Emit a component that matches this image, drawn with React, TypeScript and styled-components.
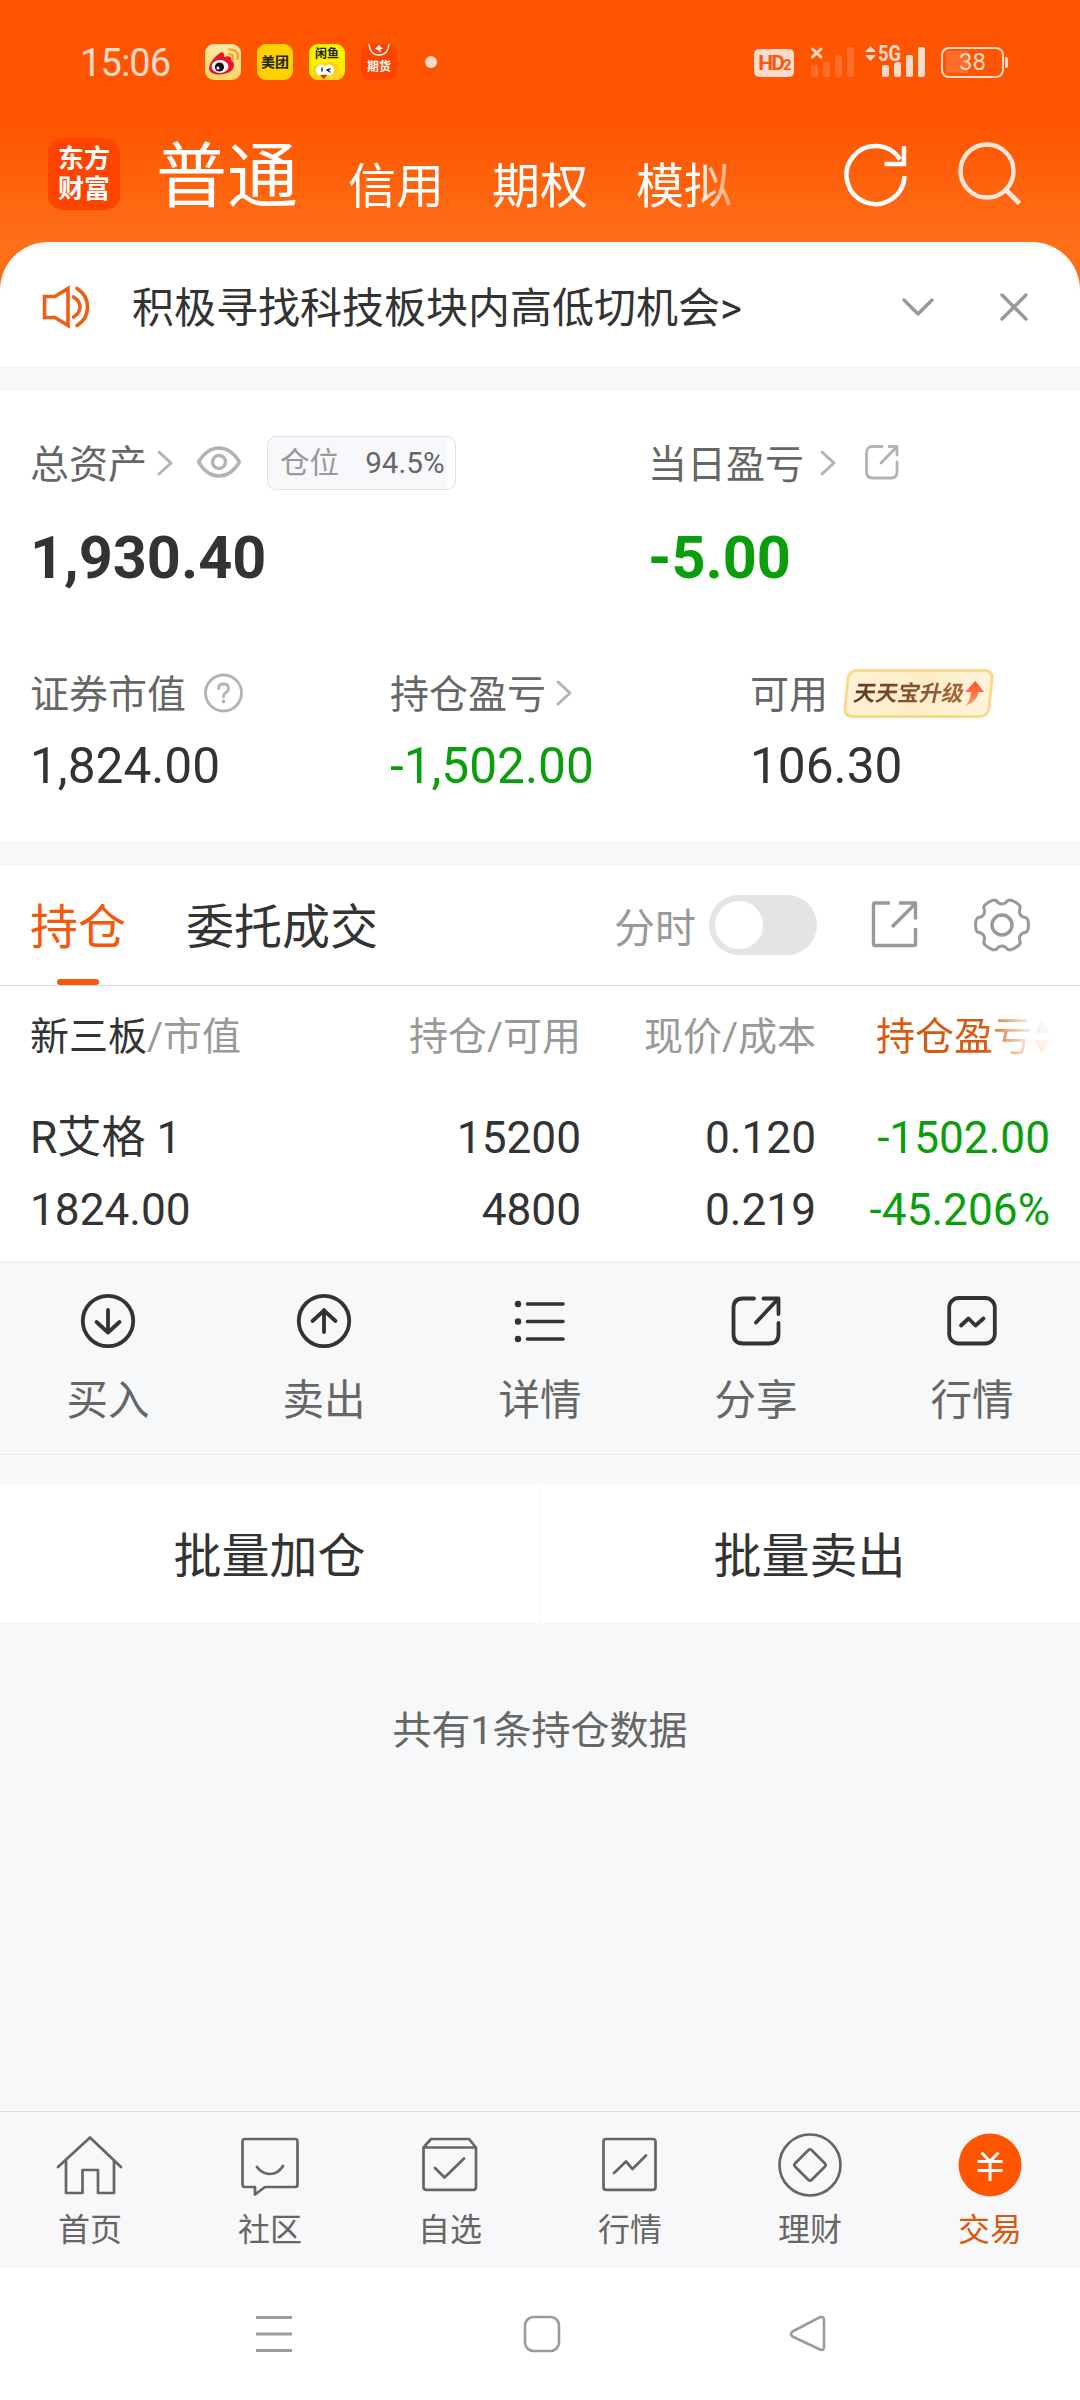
import React from "react";
import styled, { createGlobalStyle } from "styled-components";

const GlobalStyle = createGlobalStyle`
  * { box-sizing: border-box; }
  body {
    margin: 0;
    background: #fff;
    font-family: Roboto, "Noto Sans CJK SC", sans-serif;
    color: #333;
  }
  svg { display: block; flex: none; overflow: visible; }
`;

const INK = "#333";
const SUB = "#666";
const MUTED = "#999";
const LIGHT = "#b3b3b3";
const ACCENT = "#f4590a";
const GREEN = "#0a9e0c";
const STATUS = "#ffd9c9";

const Screen = styled.div`
  width: 1080px;
  height: 2400px;
  display: flex;
  flex-direction: column;
  overflow: hidden;
  white-space: nowrap;
  background: linear-gradient(#ff5500 0, #ff5500 122px, #ff7019 246px, #ff6a14 300px, #f7f8fa 300px);
`;

/* ---------- status bar ---------- */

const StatusBar = styled.div`
  height: 124px;
  flex: none;
  display: flex;
  align-items: center;
  padding: 0 72px 0 80px;
  color: ${STATUS};
`;

const Clock = styled.div`
  width: 125px;
  padding-top: 2px;
  font-size: 38px;
  line-height: 40px;
  letter-spacing: -0.9px;
`;

const AppIcons = styled.div`
  display: flex;
  align-items: center;
  gap: 16px;
  height: 36px;
`;

const AppIcon = styled.div<{ $bg: string; $color?: string; $size?: number; $pad?: number }>`
  width: 36px;
  height: 36px;
  border-radius: 9px;
  overflow: hidden;
  background: ${(p) => p.$bg};
  color: ${(p) => p.$color ?? "#222"};
  font-size: ${(p) => p.$size ?? 14}px;
  line-height: 16px;
  font-weight: 700;
  text-align: center;
  padding-top: ${(p) => p.$pad ?? 0}px;
`;

const Dot = styled.div`
  width: 12px;
  height: 12px;
  margin-left: 12px;
  border-radius: 50%;
  background: ${STATUS};
`;

const StatusRight = styled.div`
  margin-left: auto;
  display: flex;
  align-items: center;
`;

const HdBadge = styled.div`
  width: 40px;
  height: 28px;
  margin: 1px 17px 0 0;
  border-radius: 5px;
  background: ${STATUS};
  color: #f0590f;
  display: flex;
  justify-content: center;
  align-items: baseline;
  font: 700 21px/28px "Roboto", sans-serif;
  letter-spacing: -1.8px;
  small { font-size: 15px; }
`;

const Battery = styled.div`
  width: 63px;
  height: 31px;
  margin-left: 16px;
  border: 2.5px solid ${STATUS};
  border-radius: 8px;
  padding: 2px;
  background: linear-gradient(90deg, #ff6d2b 22px, transparent 22px) 3px 2px / 52px 22px no-repeat;
  text-align: center;
  font-size: 24px;
  line-height: 23px;
`;

const BatteryTip = styled.div`
  width: 3px;
  height: 11px;
  margin-left: 1px;
  background: ${STATUS};
  border-radius: 0 2px 2px 0;
`;

/* ---------- title bar ---------- */

const TitleBar = styled.div`
  height: 118px;
  flex: none;
  display: flex;
  align-items: flex-start;
  padding: 14px 59px 0 48px;
  color: #fff;
`;

const Logo = styled.div`
  width: 72px;
  height: 72px;
  border-radius: 15px;
  background: #ff4400;
  padding-top: 6px;
  text-align: center;
  font-weight: 700;
  font-size: 26px;
  line-height: 30px;
`;

const AccountTabs = styled.div`
  display: flex;
  gap: 48px;
  width: 590px;
  margin-left: 36px;
  height: 84px;
  mask-image: linear-gradient(90deg, #000 540px, transparent 600px);
`;

const AccountTab = styled.div<{ $active?: boolean }>`
  width: ${(p) => (p.$active ? 144 : 96)}px;
  font-size: ${(p) => (p.$active ? 71 : 48)}px;
  line-height: ${(p) => (p.$active ? 77 : 98)}px;
`;

const TitleActions = styled.div`
  margin: 4px 0 0 auto;
  display: flex;
  gap: 49px;
`;

/* ---------- notice ---------- */

const Notice = styled.div`
  height: 125px;
  flex: none;
  display: flex;
  align-items: center;
  padding: 5px 52px 0 42px;
  border-radius: 48px 48px 0 0;
  background: linear-gradient(#f7f8fa 5px, #fff 5px);
`;

const NoticeText = styled.div`
  margin-left: 42px;
  flex: 1;
  padding-top: 4px;
  font-size: 42px;
  line-height: 60px;
`;

const Gap = styled.div<{ $h: number }>`
  height: ${(p) => p.$h}px;
  flex: none;
  background: #f7f8fa;
`;

/* ---------- assets ---------- */

const Assets = styled.div`
  height: 450px;
  flex: none;
  background: #fff;
  padding: 44px 0 0 30px;
`;

const AssetRow = styled.div<{ $cols: string; $top?: number }>`
  display: grid;
  grid-template-columns: ${(p) => p.$cols};
  margin-top: ${(p) => p.$top ?? 0}px;
`;

const Label = styled.div`
  display: flex;
  align-items: center;
  height: 56px;
  color: ${SUB};
  font-size: 39px;
  line-height: 56px;
`;

const LabelText = styled.span`
  padding-top: 3px;
`;

const Space = styled.span<{ $w: number }>`
  width: ${(p) => p.$w}px;
  flex: none;
`;

const Total = styled.div<{ $green?: boolean }>`
  margin-top: 31px;
  height: 72px;
  font-size: 59.4px;
  line-height: 72px;
  font-weight: 700;
  color: ${(p) => (p.$green ? GREEN : INK)};
`;

const Amount = styled.div<{ $green?: boolean }>`
  margin-top: 15px;
  font-size: 49.6px;
  line-height: 60px;
  color: ${(p) => (p.$green ? GREEN : INK)};
`;

const PositionBadge = styled.div`
  width: 189px;
  height: 54px;
  border: 1px solid #e0e0e2;
  border-radius: 9px;
  background: linear-gradient(90deg, #f7f8fb 179px, #fff 179px);
  display: flex;
  align-items: center;
  padding-left: 12px;
  font-size: 29.6px;
  line-height: 50px;
  color: ${MUTED};
  b { font-weight: 400; color: ${SUB}; margin-left: 26px; }
`;

const Promo = styled.div`
  width: 147px;
  height: 49px;
  margin-left: 17px;
  border: 3px solid #f8d98b;
  border-radius: 9px;
  background: linear-gradient(100deg, #fff1d6, #fdedc8 50%, #fff3da);
  transform: skewX(-6deg);
  display: flex;
  align-items: center;
  padding-left: 6px;
`;

const PromoText = styled.span`
  font-size: 22px;
  line-height: 40px;
  font-weight: 700;
  transform: skewX(-6deg);
  background: linear-gradient(90deg, #5e3a20, #a8683a);
  background-clip: text;
  color: transparent;
`;

/* ---------- holdings ---------- */

const HoldingTabs = styled.div`
  height: 121px;
  flex: none;
  display: flex;
  background: #fff;
  border-bottom: 1px solid #dcdcde;
  padding: 0 51px 0 30px;
`;

const HoldingTab = styled.div<{ $active?: boolean }>`
  display: flex;
  flex-direction: column;
  align-items: center;
  margin-right: 60px;
  padding-top: 33px;
  font-size: 48px;
  line-height: 60px;
  color: ${(p) => (p.$active ? ACCENT : INK)};
  &::after {
    content: "";
    width: 42px;
    height: 6px;
    margin-top: 21px;
    border-radius: 3px;
    background: ${(p) => (p.$active ? ACCENT : "transparent")};
  }
`;

const TabTools = styled.div`
  margin-left: auto;
  display: flex;
  align-items: center;
  color: ${MUTED};
  font-size: 41px;
`;

const Toggle = styled.div`
  width: 108px;
  height: 60px;
  margin: 0 54px 0 13px;
  padding: 6px;
  border-radius: 30px;
  background: #e4e4e7;
  &::after {
    content: "";
    display: block;
    width: 48px;
    height: 48px;
    border-radius: 50%;
    background: #fff;
  }
`;

const Table = styled.div`
  height: 276px;
  flex: none;
  background: #fff;
  padding: 1px 30px 0;
`;

const Row = styled.div<{ $head?: boolean; $top: number }>`
  display: grid;
  grid-template-columns: 330px 221px 235px 234px;
  margin-top: ${(p) => p.$top}px;
  font-size: ${(p) => (p.$head ? 39 : 44.2)}px;
  line-height: 60px;
  color: ${(p) => (p.$head ? MUTED : INK)};
`;

const Cell = styled.div<{ $green?: boolean }>`
  color: ${(p) => (p.$green ? GREEN : "inherit")};
  &:not(:first-child) { text-align: right; }
  b { font-weight: 400; color: ${INK}; }
`;

const SortCell = styled.div`
  display: flex;
  align-items: center;
  justify-content: flex-end;
  gap: 2px;
  color: #d9590f;
  mask-image: linear-gradient(90deg, #000 168px, rgba(0, 0, 0, 0.25) 206px, rgba(0, 0, 0, 0.12) 216px, rgba(0, 0, 0, 0.06) 234px);
`;

/* ---------- row actions ---------- */

const Actions = styled.div`
  height: 193px;
  flex: none;
  display: grid;
  grid-template-columns: repeat(5, 1fr);
  border-top: 1px solid #e8e9eb;
  border-bottom: 1px solid #ebecee;
  background: #f7f8fa;
`;

const Action = styled.div`
  display: flex;
  flex-direction: column;
  align-items: center;
  padding-top: 30px;
  gap: 22px;
  font-size: 41.5px;
  line-height: 60px;
  color: ${SUB};
`;

const Batch = styled.div`
  height: 138px;
  flex: none;
  display: grid;
  grid-template-columns: 1fr 1fr;
  background: #fff;
`;

const BatchButton = styled.div`
  padding-right: 1px;
  font-size: 48px;
  line-height: 143px;
  height: 138px;
  text-align: center;
  & + & { box-shadow: -1px 0 #f4f5f6; }
`;

const Summary = styled.div`
  flex: 1;
  padding-top: 78px;
  background: #f7f8fa;
  text-align: center;
  color: ${SUB};
  font-size: 39px;
  line-height: 60px;
`;

/* ---------- bottom bars ---------- */

const NavBar = styled.div`
  height: 157px;
  flex: none;
  display: grid;
  grid-template-columns: repeat(6, 1fr);
  border-top: 1px solid #dfe0e2;
  background: #f8f8fa;
`;

const NavItem = styled.div<{ $active?: boolean }>`
  display: flex;
  flex-direction: column;
  align-items: center;
  padding-top: 21px;
  font-size: 32px;
  line-height: 40px;
  gap: 13px;
  color: ${(p) => (p.$active ? "#d9590f" : SUB)};
`;

const SystemBar = styled.div`
  height: 132px;
  flex: none;
  display: flex;
  justify-content: space-between;
  padding: 47px 254px 0 255px;
  background: #fff;
`;

/* ---------- icons ---------- */

const Chevron = () => (
  <svg width="16" height="26" fill="none" stroke={LIGHT} strokeWidth="3" strokeLinecap="round" strokeLinejoin="round">
    <path d="M2 2 L14 13 L2 24" />
  </svg>
);

const Bars = ({ color }: { color: string }) => (
  <g fill={color}>
    <rect x="0" y="18" width="7" height="12" rx="2" />
    <rect x="12" y="15" width="7" height="15" rx="2" />
    <rect x="24" y="8" width="7" height="22" rx="2" />
    <rect x="36" y="0" width="7" height="30" rx="2" />
  </g>
);

const gearPath = (() => {
  const pt = (x: number, y: number, a: number) => {
    const c = Math.cos(a), s = Math.sin(a);
    return `${(x * c - y * s).toFixed(2)} ${(x * s + y * c).toFixed(2)}`;
  };
  let d = "";
  for (let i = 0; i < 6; i++) {
    const a = (i * Math.PI) / 3;
    d += `${i ? "L" : "M"}${pt(26, -4.6, a)} Q${pt(26.8, 0, a)} ${pt(26, 4.6, a)} L${pt(24.6, 7, a)} Q${pt(14.9, 8.6, a)} ${pt(18.4, 17.8, a)} `;
  }
  return d + "Z";
})();

const stroke = (color: string, w: number) => ({
  fill: "none",
  stroke: color,
  strokeWidth: w,
  strokeLinecap: "round" as const,
  strokeLinejoin: "round" as const,
});

const actions = [
  {
    label: "买入",
    icon: (<><circle r="25.2" /><path d="M0 -11 V11 M-11.5 1 L0 11.5 L11.5 1" /></>),
  },
  {
    label: "卖出",
    icon: (<><circle r="25.2" /><path d="M0 11 V-11 M-11.5 0 L0 -10.5 L11.5 0" /></>),
  },
  {
    label: "详情",
    icon: (
      <>
        <path d="M-12.5 -17 H23 M-12.5 .5 H23 M-12.5 18 H23" strokeWidth="3.6" />
        <path d="M-22 -17 h.01 M-22 .5 h.01 M-22 18 h.01" strokeWidth="6.4" />
      </>
    ),
  },
  {
    label: "分享",
    icon: (<path d="M-2 -22.5 H-13 Q-22.5 -22.5 -22.5 -13 V13 Q-22.5 22.5 -13 22.5 H13 Q22.5 22.5 22.5 13 V2 M7.5 -22.5 H22.5 V-7 M22 -22 L0 1.5" />),
  },
  {
    label: "行情",
    icon: (<><rect x="-22.8" y="-23" width="45.6" height="45.5" rx="9.5" /><path d="M-11 4.5 L-3.5 -2.5 L3.5 4.5 L11.5 -2.5" /></>),
  },
];

const navItems = [
  { label: "首页", icon: <path d="M-32 2 L0 -27.5 L31 2 M-24 -5 V28 H-7.5 V5 H8 V28 H24 V-5" /> },
  {
    label: "社区",
    icon: <path d="M-25 -26 H25 Q27.5 -26 27.5 -23.5 V19.5 Q27.5 22 25 22 H-5 L-15 29.5 V22 H-25 Q-27.5 22 -27.5 19.5 V-23.5 Q-27.5 -26 -25 -26 Z M-13 2 Q-8 9 0 9 T13 1" />,
  },
  {
    label: "自选",
    icon: <path d="M-26.5 -17.5 V22 Q-26.5 24.8 -24 24.8 H23.5 Q26 24.8 26 22 V-17.5 Z L-19 -26 H19 L26 -17.5 M-15 3 L-5.5 12.5 L14 -6.5" />,
  },
  {
    label: "行情",
    icon: (<><rect x="-26.5" y="-26" width="52" height="50.8" rx="2.5" /><path d="M-16 8 L-4 -3.5 L2.5 4 L16 -9.5" /></>),
  },
  {
    label: "理财",
    icon: (<><circle r="30.5" /><path d="M-1.5 -15 Q0 -16.5 1.5 -15 L15 -1.5 Q16.5 0 15 1.5 L1.5 15 Q0 16.5 -1.5 15 L-15 1.5 Q-16.5 0 -15 -1.5 Z" /></>),
  },
  {
    label: "交易",
    active: true,
    icon: (
      <>
        <circle r="31.5" fill="#ff5500" stroke="none" />
        <path d="M-8.5 -12.5 L0 -3.5 L8.5 -12.5 M-12.5 -3.5 H12.5 M-12.5 5.5 H12.5 M0 -3.5 V16" stroke="#fff" strokeWidth="3" strokeLinecap="butt" />
      </>
    ),
  },
];

export default function App() {
  return (
    <Screen>
      <GlobalStyle />
      <StatusBar>
        <Clock>15:06</Clock>
        <AppIcons>
          <AppIcon $bg="linear-gradient(#ffe8a8,#ffd566)">
            <svg width="36" height="36">
              <path d="M4 25 C4 18 11 12 15 9 C18 7 20 10 19 13 C24 11 27 13 26 16 C30 18 30 24 26 27 C20 32 5 32 4 25 Z" fill="#e6162d" />
              <ellipse cx="15" cy="22.500" rx="8.500" ry="6.500" fill="#fff" />
              <circle cx="14.500" cy="23" r="4.600" fill="#111" />
              <circle cx="13" cy="24" r="1.500" fill="#fff" />
              <path d="M24 10 Q29 10 28 15 M24 5.500 Q34 5 32.500 15" {...stroke("#f7a01b", 2.2)} />
            </svg>
          </AppIcon>
          <AppIcon $bg="#ffd100" $pad={10}>美团</AppIcon>
          <AppIcon $bg="#fdf100" $size={12} $pad={2}>
            闲鱼
            <svg width="36" height="18">
              <path d="M4 20 V5 Q12 0 22 0 Q33 2 33 20 Z" fill="#ffd21c" />
              <ellipse cx="12" cy="8" rx="5" ry="5.500" fill="#fff" />
              <ellipse cx="20" cy="8" rx="5" ry="5.500" fill="#fff" />
              <path d="M13 6 V9 M18 8 L21 7 M18 8 L21 10" {...stroke("#222", 1.4)} />
              <path d="M11 13 H18 L15 17 Z" fill="#d3301c" />
            </svg>
          </AppIcon>
          <AppIcon $bg="#ff4400" $color="#fff" $size={12}>
            <svg width="36" height="15">
              <path d="M8 0 Q9 11 18 11 Q27 11 28 0" {...stroke("#fff", 1.4)} />
              <path d="M14 5 L18 1 L22 5 L19 5 L20 9 L17 6 Z" fill="#fff" />
            </svg>
            期货
          </AppIcon>
          <Dot />
        </AppIcons>
        <StatusRight>
          <HdBadge>HD<small>2</small></HdBadge>
          <svg width="43" height="30" style={{ marginRight: 11 }}>
            <Bars color="#ff6d2b" />
            <path d="M1.500 2 L10 10 M10 2 L1.500 10" {...stroke(STATUS, 3)} />
          </svg>
          <svg width="60" height="30">
            <path d="M0 5 L5.500 -1 L11 5 Z M0 8 L5.500 14 L11 8 Z" fill={STATUS} />
            <g transform="translate(17 0)"><Bars color={STATUS} /></g>
            <text x="13" y="13.500" fontSize="22" fontWeight="700" textLength="23" lengthAdjust="spacingAndGlyphs" fill={STATUS} stroke="#ff5500" strokeWidth="3" paintOrder="stroke">5G</text>
          </svg>
          <Battery>38</Battery>
          <BatteryTip />
        </StatusRight>
      </StatusBar>

      <TitleBar>
        <Logo>东方<br />财富</Logo>
        <AccountTabs>
          <AccountTab $active>普通</AccountTab>
          <AccountTab>信用</AccountTab>
          <AccountTab>期权</AccountTab>
          <AccountTab>模拟</AccountTab>
        </AccountTabs>
        <TitleActions>
          <svg width="64" height="64" fill="none" stroke="#fff" strokeWidth="4.500">
            <path d="M60.500 34 A29 29 0 1 1 56 17.500 M60 4 V22 H40.500" />
          </svg>
          <svg width="64" height="64" fill="none" stroke="#ffe5d8" strokeWidth="4.500">
            <circle cx="30" cy="29" r="26.500" />
            <path d="M48.500 47.500 L62.500 61.500" strokeWidth="5" />
          </svg>
        </TitleActions>
      </TitleBar>

      <Notice>
        <svg width="48" height="44" {...stroke("#ec5f14", 3.6)}>
          <path d="M2.500 11.500 H13 L26 3.500 V40.500 L13 32.500 H2.500 Z" strokeLinejoin="miter" />
          <path d="M31.500 12 Q38 16 38 22 Q38 28 31.500 32 M35 3.500 Q45.500 10 45.500 22 Q45.500 34 35 40.500" />
        </svg>
        <NoticeText>积极寻找科技板块内高低切机会&gt;</NoticeText>
        <svg width="32" height="20" {...stroke(MUTED, 3.4)}><path d="M2 3 L16 17 L30 3" /></svg>
        <Space $w={66} />
        <svg width="28" height="28" {...stroke(MUTED, 3.4)}><path d="M2 2 L26 26 M26 2 L2 26" /></svg>
      </Notice>
      <Gap $h={24} />

      <Assets>
        <AssetRow $cols="618px 1fr">
          <div>
            <Label>
              <LabelText>总资产</LabelText>
              <Space $w={10} /><Chevron /><Space $w={24} />
              <svg width="44" height="32" {...stroke(LIGHT, 3.4)}>
                <path d="M1.500 15 Q10 1 22 1 Q34 1 42.500 15 Q34 29 22 29 Q10 29 1.500 15 Z" />
                <circle cx="22" cy="15" r="6.500" />
              </svg>
              <Space $w={26} />
              <PositionBadge>仓位<b>94.5%</b></PositionBadge>
            </Label>
            <Total>1,930.40</Total>
          </div>
          <div>
            <Label>
              <LabelText>当日盈亏</LabelText>
              <Space $w={16} /><Chevron /><Space $w={29} />
              <svg width="34" height="36" {...stroke(LIGHT, 2.8)}>
                <path d="M17 1.500 H8 Q1.500 1.500 1.500 8 V27 Q1.500 33 8 33 H26 Q32 33 32 27 V17 M24 1.500 H32 V10 M31.500 2 L16 18" />
              </svg>
            </Label>
            <Total $green>-5.00</Total>
          </div>
        </AssetRow>
        <AssetRow $cols="360px 360px 1fr" $top={71}>
          <div>
            <Label>
              <LabelText>证券市值</LabelText>
              <Space $w={18} />
              <svg width="40" height="40" {...stroke(LIGHT, 2.8)}>
                <circle cx="19.500" cy="20" r="18" />
                <path d="M14.500 15.500 Q14.500 11 19.500 11 Q24.500 11 24.500 15.500 Q24.500 18 22 19.500 Q19.500 21 19.500 24" />
                <path d="M19.500 28.500 h.01" strokeWidth="3.600" />
              </svg>
            </Label>
            <Amount>1,824.00</Amount>
          </div>
          <div>
            <Label><LabelText>持仓盈亏</LabelText><Space $w={10} /><Chevron /></Label>
            <Amount $green>-1,502.00</Amount>
          </div>
          <div>
            <Label>
              <LabelText>可用</LabelText>
              <Promo>
                <PromoText>天天宝升级</PromoText>
                <svg width="20" height="25">
                  <defs>
                    <linearGradient id="rise" x1="0" y1="0" x2="0" y2="1">
                      <stop offset="0" stopColor="#fb4d2e" />
                      <stop offset="1" stopColor="#ff9c6c" />
                    </linearGradient>
                  </defs>
                  <path d="M10 0 L20 11 H14.500 Q14 20 3 25 Q7 19 7 11 H1 Z" fill="url(#rise)" />
                </svg>
              </Promo>
            </Label>
            <Amount>106.30</Amount>
          </div>
        </AssetRow>
      </Assets>
      <Gap $h={24} />

      <HoldingTabs>
        <HoldingTab $active>持仓</HoldingTab>
        <HoldingTab>委托成交</HoldingTab>
        <TabTools>
          分时
          <Toggle />
          <svg width="48" height="48" {...stroke(MUTED, 3.4)} strokeLinecap="butt">
            <path d="M19 2 H4 Q2.500 2 2.500 3.500 V43 Q2.500 44.500 4 44.500 H43 Q44.500 44.500 44.500 43 V27 M28 2 H44.500 V18.500 M44.500 2.500 L21 26" />
          </svg>
          <Space $w={56} />
          <svg width="54" height="54" viewBox="-27 -27 54 54" {...stroke(MUTED, 3)}>
            <path d={gearPath} />
            <circle r="10" strokeWidth="3.400" />
          </svg>
        </TabTools>
      </HoldingTabs>

      <Table>
        <Row $head $top={20}>
          <Cell><b>新三板</b>/市值</Cell>
          <Cell>持仓/可用</Cell>
          <Cell>现价/成本</Cell>
          <SortCell>
            持仓盈亏
            <svg width="16" height="36">
              <path d="M0 15 L8 1 L16 15 Z" fill="#aaa" />
              <path d="M0 21 L8 35 L16 21 Z" fill="#ff5500" />
            </svg>
          </SortCell>
        </Row>
        <Row $top={41}>
          <Cell>R艾格 1</Cell>
          <Cell>15200</Cell>
          <Cell>0.120</Cell>
          <Cell $green>-1502.00</Cell>
        </Row>
        <Row $top={12}>
          <Cell>1824.00</Cell>
          <Cell>4800</Cell>
          <Cell>0.219</Cell>
          <Cell $green>-45.206%</Cell>
        </Row>
      </Table>

      <Actions>
        {actions.map((a) => (
          <Action key={a.label}>
            <svg width="56" height="56" viewBox="-28 -28 56 56" {...stroke(INK, 3.8)}>{a.icon}</svg>
            {a.label}
          </Action>
        ))}
      </Actions>
      <Gap $h={30} />

      <Batch>
        <BatchButton>批量加仓</BatchButton>
        <BatchButton>批量卖出</BatchButton>
      </Batch>
      <Summary>共有1条持仓数据</Summary>

      <NavBar>
        {navItems.map((n) => (
          <NavItem key={n.label} $active={n.active}>
            <svg width="64" height="64" viewBox="-32 -32 64 64" {...stroke(SUB, 2.7)}>{n.icon}</svg>
            {n.label}
          </NavItem>
        ))}
      </NavBar>

      <SystemBar>
        <svg width="38" height="38" {...stroke("#9b9b9b", 3)} strokeLinecap="butt">
          <path d="M1 2.500 H37 M1 19 H37 M1 35.500 H37" />
        </svg>
        <svg width="38" height="38" {...stroke("#9b9b9b", 2.6)}>
          <rect x="2" y="2" width="34" height="34" rx="8.500" />
        </svg>
        <svg width="36" height="38" {...stroke("#9b9b9b", 2.6)}>
          <path d="M30 2.200 Q34 1 34 5 V32 Q34 36 30 34.500 L2.500 21.500 Q-.5 19 2.500 16.500 Z" />
        </svg>
      </SystemBar>
    </Screen>
  );
}
